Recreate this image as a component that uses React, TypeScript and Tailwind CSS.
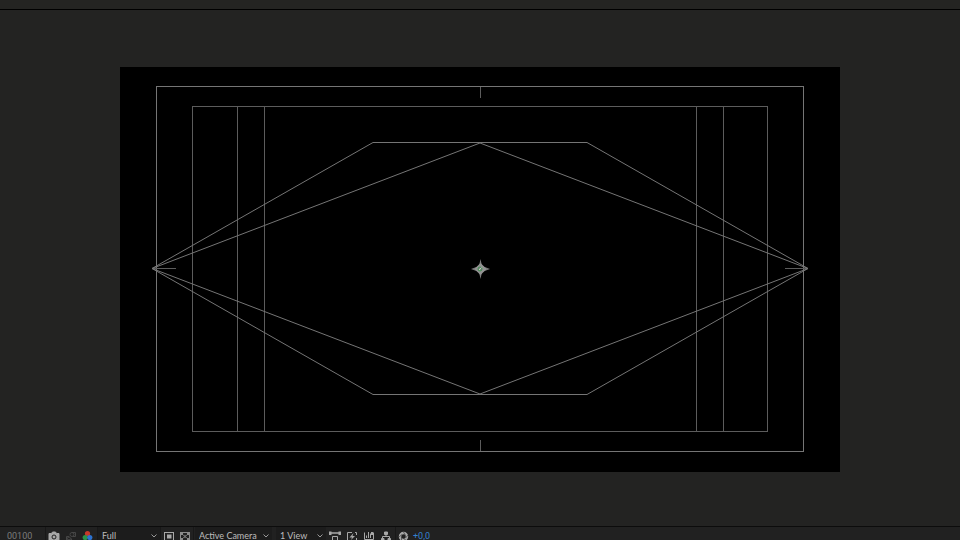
import type { ReactNode } from 'react';

const guide = '#757575';

function Chevron() {
  return (
    <svg viewBox="0 0 6 4" className="pointer-events-none absolute right-[3px] top-[7px] w-[6px] h-[4px]" fill="none" stroke="#999" aria-hidden="true">
      <path d="M0.5 0.5 L3 3 L5.5 0.5" />
    </svg>
  );
}

function Picker({ label, options, className }: { label: string; options: string[]; className: string }) {
  return (
    <div className={`relative h-[18px] shrink-0 bg-[#1c1c1c] ${className}`}>
      <select aria-label={label} className="block w-full h-[18px] appearance-none bg-transparent pl-1 pr-3 font-['Lato',sans-serif] text-[9px] leading-[18px] text-[#bcbcbc] outline-none">
        {options.map((o) => (
          <option key={o}>{o}</option>
        ))}
      </select>
      <Chevron />
    </div>
  );
}

function IconButton({ label, children }: { label: string; children: ReactNode }) {
  return (
    <button type="button" aria-label={label} title={label} className="h-[18px] w-[12px] shrink-0 flex items-center justify-center text-[#a8a8a8]">
      <svg viewBox="0 0 12 12" className="w-[12px] h-[12px]" fill="none" stroke="currentColor">
        {children}
      </svg>
    </button>
  );
}

function Divider() {
  return <div className="w-px h-[18px] shrink-0 bg-[#181818]" />;
}

function Composition() {
  return (
    <div className="w-3/4 bg-black">
      <svg viewBox="0 0 720 405" className="block w-full" fill="none" stroke={guide} role="img" aria-label="Composition">
        <rect x="36.5" y="19.5" width="647" height="365" />
        <g stroke="#5c5c5c">
          <rect x="72.5" y="39.5" width="575" height="325" />
          <path d="M117.5 40V364M144.5 40V364M576.5 40V364M603.5 40V364" />
          <path d="M360.5 20V31M360.5 373V384M33 201.5H56M665 201.5H688" />
        </g>
        {/* mask shapes */}
        <path d="M32 201.5L253 75.5H467L688 201.5L467 327.5H253Z" />
        <path d="M32 201.5L360 76L688 201.5L360 327Z" />
        {/* anchor point */}
        <path d="M360.5 192L362 199L370 202L362 205L360.5 212L359 205L351 202L359 199Z" fill="#7c7c7c" stroke="none" />
        <path d="M360.5 197L365.5 202L360.5 207L355.5 202Z" fill="#929292" stroke="#929292" strokeWidth="1.5" strokeLinejoin="round" />
        <circle cx="360" cy="202" r="2" fill="#858585" stroke="#3f8f50" />
        <path d="M359 203L361.5 200.5" stroke="#c4c4c4" />
      </svg>
    </div>
  );
}

export default function App() {
  return (
    <div className="h-screen flex flex-col overflow-hidden bg-[#232322] font-['Roboto',sans-serif]">
      <header className="h-[10px] shrink-0 bg-[#242422] border-b border-black" />

      <main className="flex-1 min-h-0 flex items-center justify-center pt-[3px]">
        <Composition />
      </main>

      {/* the viewer toolbar runs past the lower edge of the window */}
      <footer className="h-[14px] shrink-0 overflow-hidden border-t border-[#0c0c0c] bg-[#212121] text-[9px] leading-[8px]">
        <div className="flex h-[18px]">
          <span className="w-[45px] shrink-0 pt-[5px] pl-[7px] text-[#7c7c7c]">00100</span>
          <Divider />
          <div className="flex gap-[5px] pl-[2px] pr-[3px]">
            <IconButton label="Take snapshot">
              <path d="M1 3.5H3.5L4.5 2H7.5L8.5 3.5H11V10.5H1Z" fill="currentColor" />
              <circle cx="6" cy="7" r="2" stroke="#222" />
            </IconButton>
            <IconButton label="Show snapshot">
              <path d="M7 2.5H10.5V6.5H8M4 6.5H1.5V10H6.5V8.5" stroke="#464646" />
              <circle cx="7" cy="4.5" r="2" stroke="#464646" />
              <circle cx="4" cy="8.5" r="1.5" stroke="#464646" />
            </IconButton>
            <IconButton label="Show channel">
              <circle cx="5.5" cy="3.5" r="2.6" fill="#c4392b" stroke="none" />
              <circle cx="3.2" cy="7.5" r="2.6" fill="#2b9147" stroke="none" />
              <circle cx="7.8" cy="7.5" r="2.6" fill="#2c72d0" stroke="none" />
              <path d="M7 10H11L9 12Z" fill="#bbb" stroke="none" />
            </IconButton>
          </div>
          <Divider />
          <Picker label="Resolution" options={['Full', 'Half', 'Third', 'Quarter']} className="w-[62px]" />
          <Divider />
          <div className="flex gap-1 px-[2px]">
            <IconButton label="Region of interest">
              <rect x="1.5" y="2.5" width="9" height="8" />
              <rect x="4" y="4.5" width="4.5" height="4" fill="currentColor" stroke="none" />
            </IconButton>
            <IconButton label="Transparency grid">
              <rect x="1.5" y="2.5" width="9" height="8" stroke="#8a8a8a" />
              <path d="M2 3H4V5H2ZM8 3H10V5H8ZM5 5.5H7V7.5H5ZM2 8H4V10H2ZM8 8H10V10H8Z" fill="#8a8a8a" stroke="none" />
              <path d="M4 5L8 8M8 5L4 8" stroke="#6e6e6e" />
            </IconButton>
          </div>
          <Divider />
          <div className="flex gap-1 pl-px">
            <Picker label="3D view" options={['Active Camera', 'Front', 'Left', 'Top']} className="w-[77px]" />
            <Picker label="View layout" options={['1 View', '2 Views', '4 Views']} className="w-[50px]" />
          </div>
          <div className="flex gap-[5px] pl-[3px] pr-[3px]">
            <IconButton label="Pixel aspect ratio correction">
              <path d="M1 3H11" strokeWidth="1.5" />
              <path d="M3.5 6.5H8.5V10.5H3.5Z" />
              <path d="M0 1.5H2.5V5H0ZM9.5 1.5H12V5H9.5Z" fill="currentColor" stroke="none" />
            </IconButton>
            <IconButton label="Fast previews">
              <path d="M6 2.5H1.5V10.5H10.5V8M9 2.5H10.5V5" />
              <path d="M7.5 3L3.5 7.5H6L5 10L9 6H6.5Z" fill="currentColor" stroke="none" />
            </IconButton>
            <IconButton label="Timeline">
              <path d="M1.5 2.5V9.5H10.5V2.5M3.5 5.5V8M5.5 2V8M7.5 3.5V8" />
              <path d="M8 2H10V5H8Z" fill="currentColor" stroke="none" />
            </IconButton>
            <IconButton label="Composition flowchart">
              <path d="M4.5 2H7.5V4.5H4.5ZM1.5 8.5H4V10.5H1.5ZM8 8.5H10.5V10.5H8Z" fill="currentColor" />
              <path d="M6 4V6.5M2.5 8V6.5H9.5V8" />
            </IconButton>
          </div>
          <Divider />
          <div className="flex gap-[3px] pl-[2px]">
            <IconButton label="Reset exposure">
              <circle cx="5.5" cy="6.5" r="3.5" strokeWidth="2.5" />
              <path d="M5.5 2L7.5 5.5M10 5L7.5 8M8.5 10.5L5.5 8.5M3.5 10.5L3.5 7M1 7L4 4.5" stroke="#2c2c2c" strokeWidth="0.6" />
            </IconButton>
            <button type="button" className="h-[13px] pt-[4px] text-[#3480cf]">+0,0</button>
          </div>
        </div>
      </footer>
    </div>
  );
}
